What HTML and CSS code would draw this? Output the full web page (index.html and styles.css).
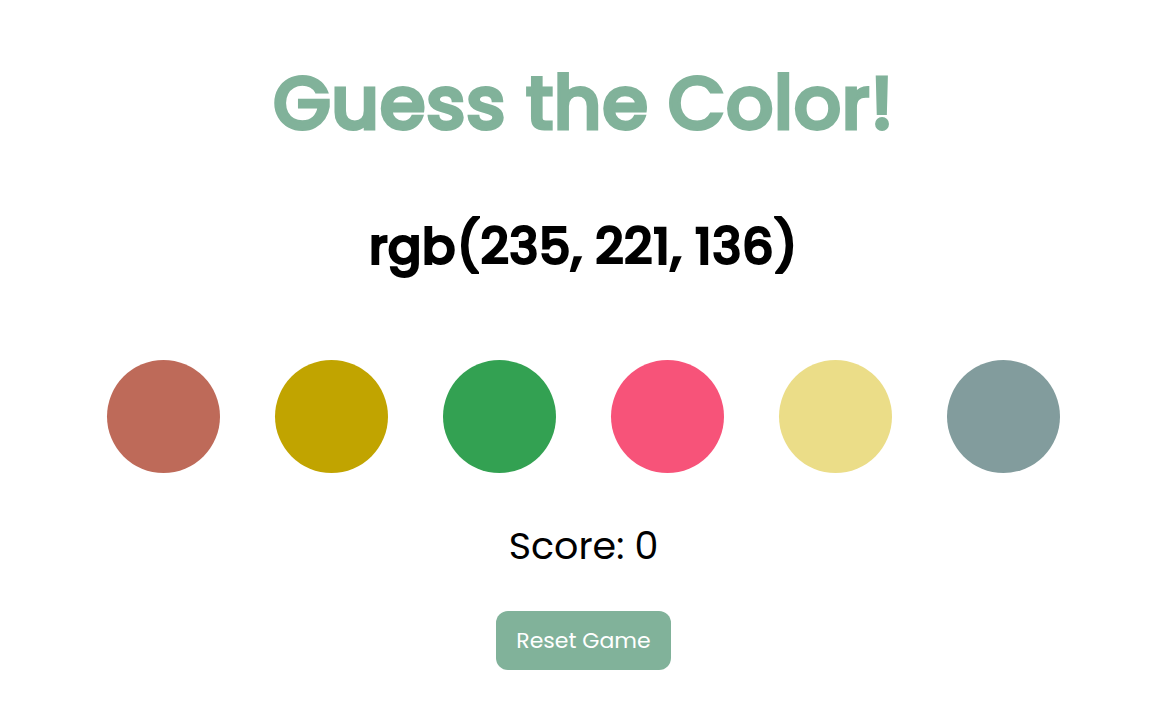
FILE: index.html
```html
<!DOCTYPE html>
<html lang="en">
<head>
<meta charset="utf-8">
<meta name="viewport" content="width=device-width, initial-scale=1">
<title>Guess the Color!</title>
<link rel="stylesheet" href="styles.css">
</head>
<body>
<main class="game">
  <h1 class="title">Guess the Color!</h1>
  <h2 class="target">rgb(235, 221, 136)</h2>
  <div class="options">
    <button type="button" class="ball brick" aria-label="Color 1"></button>
    <button type="button" class="ball mustard" aria-label="Color 2"></button>
    <button type="button" class="ball green" aria-label="Color 3"></button>
    <button type="button" class="ball pink" aria-label="Color 4"></button>
    <button type="button" class="ball yellow" aria-label="Color 5"></button>
    <button type="button" class="ball slate" aria-label="Color 6"></button>
  </div>
  <p class="score">Score: 0</p>
  <button type="button" class="reset">Reset Game</button>
</main>
</body>
</html>
```
FILE: styles.css
```css
* {
  box-sizing: border-box;
}

body {
  margin: 0;
  background: #fff;
  color: #000;
  font-family: Poppins, Lato, sans-serif;
}

.game {
  display: flex;
  flex-direction: column;
  align-items: center;
  padding: 48px 80px;
}

.title {
  margin: 0;
  color: #81b29a;
  font-size: 75px;
  line-height: 110px;
  font-weight: 500;
  -webkit-text-stroke: 3px currentColor;
}

.target {
  margin: 50px 0 0;
  font-size: 50px;
  line-height: 78px;
  font-weight: 500;
  -webkit-text-stroke: 2px currentColor;
}

.options {
  display: flex;
  flex-wrap: wrap;
  justify-content: center;
  gap: 55px;
  margin-top: 74px;
}

.ball {
  width: 113px;
  height: 113px;
  padding: 0;
  border: 0;
  border-radius: 50%;
  cursor: pointer;
}

.brick { background: #be6a59; }
.mustard { background: #c1a400; }
.green { background: #33a152; }
.pink { background: #f75379; }
.yellow { background: #ebdd88; }
.slate { background: #829c9d; }

.score {
  margin: 45px 0 0;
  font-size: 38px;
  line-height: 56px;
}

.reset {
  height: 59px;
  margin-top: 37px;
  padding: 0 20px;
  border: 0;
  border-radius: 12px;
  background: #81b29a;
  color: #fff;
  font-family: inherit;
  font-size: 22px;
  cursor: pointer;
}
```
